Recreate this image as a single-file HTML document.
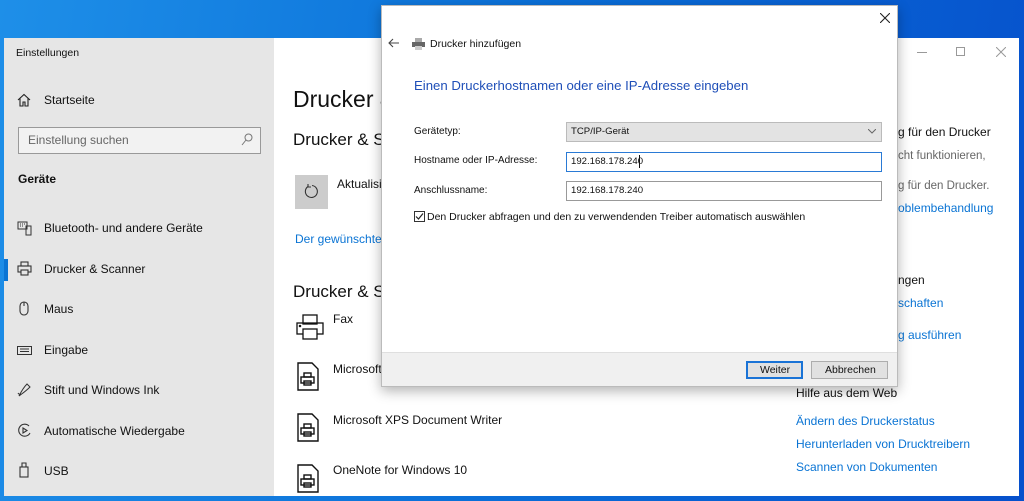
<!DOCTYPE html>
<html><head><meta charset="utf-8"><style>
*{margin:0;padding:0;box-sizing:border-box}
body{width:1024px;height:501px;overflow:hidden;position:relative;font-family:"Liberation Sans",sans-serif;background:linear-gradient(100deg,#1e8fe8 0%,#0a6fd8 50%,#0650cc 100%);}
.a{position:absolute;white-space:nowrap}
.s{font-size:12px;color:#111}
.bl{color:#0a74d4}
.d{font-size:10.5px;color:#111}
.f{font-size:9.6px;color:#111}
svg{position:absolute}
</style></head><body>
<div class="a" style="left:4px;top:38px;width:1015px;height:458px;background:#fff"></div>
<div class="a" style="left:4px;top:38px;width:270px;height:458px;background:#e6e6e6"></div>
<div class="a" style="left:16px;top:47px;font-size:10.5px;color:#111">Einstellungen</div>
<svg style="left:17px;top:93px" width="14" height="14" viewBox="0 0 14 14" fill="none" stroke="#222" stroke-width="1.1"><path d="M1 7L7 1.5 13 7M3 5.5V13H6V9H8V13H11V5.5"/></svg>
<div class="a s" style="left:44px;top:93px">Startseite</div>
<div class="a" style="left:18px;top:127px;width:243px;height:27px;border:1.5px solid #999;background:#f2f2f2"></div>
<div class="a" style="left:28px;top:133px;font-size:12px;color:#666">Einstellung suchen</div>
<svg style="left:241px;top:133px" width="12" height="13" viewBox="0 0 12 13" fill="none" stroke="#777" stroke-width="1"><circle cx="7.5" cy="4.5" r="3.5"/><path d="M5 7L1 12"/></svg>
<div class="a" style="left:18px;top:172px;font-size:12px;font-weight:bold;color:#111">Geräte</div>
<div class="a" style="left:4px;top:259px;width:4px;height:22px;background:#0a74d4"></div>
<svg style="left:17px;top:221px" width="16" height="15" viewBox="0 0 16 15" fill="none" stroke="#333" stroke-width="1"><rect x="1" y="1" width="9" height="7"/><rect x="9" y="5" width="5" height="9"/><path d="M3 3h1M5 3h1M7 3h1M3 5h1M5 5h1"/></svg>
<div class="a s" style="left:44px;top:221px">Bluetooth- und andere Geräte</div>
<svg style="left:17px;top:261px" width="16" height="15" viewBox="0 0 16 15" fill="none" stroke="#333" stroke-width="1.1"><rect x="4" y="1" width="7" height="4"/><rect x="1" y="5" width="13" height="6"/><rect x="4" y="9" width="7" height="5" fill="#e6e6e6"/></svg>
<div class="a s" style="left:44px;top:262px">Drucker &amp; Scanner</div>
<svg style="left:19px;top:301px" width="10" height="15" viewBox="0 0 10 15" fill="none" stroke="#333" stroke-width="1.1"><rect x="1" y="1" width="8" height="13" rx="4"/><path d="M5 1v4"/></svg>
<div class="a s" style="left:44px;top:302px">Maus</div>
<svg style="left:17px;top:346px" width="15" height="9" viewBox="0 0 15 9" fill="none" stroke="#333" stroke-width="1"><rect x="0.5" y="0.5" width="14" height="8"/><path d="M3 3h9M3 5.5h9"/></svg>
<div class="a s" style="left:44px;top:343px">Eingabe</div>
<svg style="left:17px;top:382px" width="15" height="15" viewBox="0 0 15 15" fill="none" stroke="#333" stroke-width="1"><path d="M2 14C4 10 6 6 10 2L13 5C9 9 6 11 2 14ZM1 11c1 2 3 1 3 1"/></svg>
<div class="a s" style="left:44px;top:383px">Stift und Windows Ink</div>
<svg style="left:17px;top:423px" width="15" height="15" viewBox="0 0 15 15" fill="none" stroke="#333" stroke-width="1.1"><path d="M12 3A6 6 0 1 0 13 10"/><path d="M6 5l4 2.5L6 10z"/></svg>
<div class="a s" style="left:44px;top:424px">Automatische Wiedergabe</div>
<svg style="left:19px;top:462px" width="10" height="16" viewBox="0 0 10 16" fill="none" stroke="#333" stroke-width="1.1"><rect x="1" y="5" width="8" height="10"/><path d="M3 5V1h4v4"/></svg>
<div class="a s" style="left:44px;top:464px">USB</div>
<div class="a" style="left:293px;top:86px;font-size:23px;color:#111">Drucker &amp;</div>
<div class="a" style="left:293px;top:130px;font-size:17px;color:#111">Drucker &amp; S</div>
<div class="a" style="left:295px;top:175px;width:33px;height:34px;background:#ccc"></div>
<svg style="left:303px;top:183px" width="17" height="17" viewBox="0 0 17 17" fill="none" stroke="#333" stroke-width="1.1"><path d="M5 3.5A6 6 0 1 0 9 2.5M5 1v3h3"/></svg>
<div class="a s" style="left:337px;top:177px">Aktualisi</div>
<div class="a s bl" style="left:295px;top:232px">Der gewünschte</div>
<div class="a" style="left:293px;top:282px;font-size:17px;color:#111">Drucker &amp; S</div>
<svg style="left:296px;top:314px" width="28" height="26" viewBox="0 0 28 26" fill="none" stroke="#111" stroke-width="1.3"><rect x="7" y="1" width="14" height="9"/><rect x="1" y="9" width="26" height="11"/><rect x="7" y="15" width="14" height="10" fill="#fff"/><circle cx="4" cy="12" r=".6" fill="#111"/></svg>
<div class="a s" style="left:333px;top:312px">Fax</div>
<svg style="left:297px;top:362px" width="22" height="29" viewBox="0 0 22 29" fill="none" stroke="#111" stroke-width="1.4"><path d="M1 1h14l6 6v21H1z"/><rect x="7" y="11" width="7" height="4"/><rect x="4" y="15" width="13" height="6"/><rect x="7" y="19" width="7" height="4"/></svg>
<div class="a s" style="left:333px;top:362px">Microsoft</div>
<svg style="left:297px;top:413px" width="22" height="29" viewBox="0 0 22 29" fill="none" stroke="#111" stroke-width="1.4"><path d="M1 1h14l6 6v21H1z"/><rect x="7" y="11" width="7" height="4"/><rect x="4" y="15" width="13" height="6"/><rect x="7" y="19" width="7" height="4"/></svg>
<div class="a s" style="left:333px;top:413px">Microsoft XPS Document Writer</div>
<svg style="left:297px;top:464px" width="22" height="29" viewBox="0 0 22 29" fill="none" stroke="#111" stroke-width="1.4"><path d="M1 1h14l6 6v21H1z"/><rect x="7" y="11" width="7" height="4"/><rect x="4" y="15" width="13" height="6"/><rect x="7" y="19" width="7" height="4"/></svg>
<div class="a s" style="left:333px;top:463px">OneNote for Windows 10</div>
<div class="a" style="left:917px;top:52px;width:10px;height:1px;background:#999"></div>
<div class="a" style="left:956px;top:47px;width:9px;height:9px;border:1px solid #999"></div>
<svg style="left:996px;top:47px" width="10" height="10" viewBox="0 0 10 10" stroke="#999" stroke-width="1"><path d="M0 0L10 10M10 0L0 10"/></svg>
<div class="a s" style="left:898px;top:125px">g für den Drucker</div>
<div class="a" style="left:898px;top:150px;font-size:11.5px;color:#666">cht funktionieren,</div>
<div class="a" style="left:898px;top:180px;font-size:11.5px;color:#666">g für den Drucker.</div>
<div class="a s bl" style="left:898px;top:201px">oblembehandlung</div>
<div class="a s" style="left:898px;top:273px">ngen</div>
<div class="a s bl" style="left:898px;top:296px">schaften</div>
<div class="a s bl" style="left:898px;top:328px">g ausführen</div>
<div class="a s" style="left:796px;top:386px">Hilfe aus dem Web</div>
<div class="a s bl" style="left:796px;top:414px">Ändern des Druckerstatus</div>
<div class="a s bl" style="left:796px;top:437px">Herunterladen von Drucktreibern</div>
<div class="a s bl" style="left:796px;top:460px">Scannen von Dokumenten</div>
<div class="a" style="left:381px;top:5px;width:517px;height:382px;background:#fff;border:1px solid #bbb;box-shadow:0 4px 12px rgba(0,0,0,.3)"></div>
<div class="a" style="left:382px;top:352px;width:515px;height:34px;background:#f0f0f0;border-top:1px solid #dfdfdf"></div>
<svg style="left:880px;top:13px" width="10" height="10" viewBox="0 0 10 10" stroke="#222" stroke-width="1.1"><path d="M0 0L10 10M10 0L0 10"/></svg>
<svg style="left:388px;top:38px" width="12" height="10" viewBox="0 0 12 10" fill="none" stroke="#444" stroke-width="1.1"><path d="M11 5H1M5 1L1 5l4 4"/></svg>
<svg style="left:412px;top:38px" width="13" height="12" viewBox="0 0 13 12"><rect x="3" y="0" width="7" height="4" fill="#aaa"/><rect x="0" y="4" width="13" height="5" fill="#666"/><rect x="3" y="8" width="7" height="4" fill="#ccc"/></svg>
<div class="a" style="left:430px;top:38px;font-size:10.5px;color:#111">Drucker hinzufügen</div>
<div class="a" style="left:414px;top:78px;font-size:13.2px;color:#1f4fb8">Einen Druckerhostnamen oder eine IP-Adresse eingeben</div>
<div class="a d" style="left:414px;top:126px;font-size:10px">Gerätetyp:</div>
<div class="a d" style="left:414px;top:155px;font-size:10px">Hostname oder IP-Adresse:</div>
<div class="a d" style="left:414px;top:185px;font-size:10px">Anschlussname:</div>
<div class="a" style="left:566px;top:122px;width:316px;height:20px;background:#e3e3e3;border:1px solid #bbb"></div>
<div class="a f" style="left:571px;top:126px">TCP/IP-Gerät</div>
<svg style="left:868px;top:129px" width="8" height="5" viewBox="0 0 8 5" fill="none" stroke="#666"><path d="M0 0l4 4 4-4"/></svg>
<div class="a" style="left:566px;top:152px;width:316px;height:20px;background:#fff;border:1px solid #2a7ad5"></div>
<div class="a f" style="left:571px;top:156px">192.168.178.240</div>
<div class="a" style="left:639px;top:155px;width:1px;height:13px;background:#111"></div>
<div class="a" style="left:566px;top:181px;width:316px;height:20px;background:#fff;border:1px solid #999"></div>
<div class="a f" style="left:571px;top:185px">192.168.178.240</div>
<div class="a" style="left:414px;top:211px;width:11px;height:11px;border:1px solid #333;background:#fff"></div>
<svg style="left:415px;top:212px" width="9" height="9" viewBox="0 0 9 9" fill="none" stroke="#222" stroke-width="1.2"><path d="M1 4.5l2.5 2.5L8 1.5"/></svg>
<div class="a d" style="left:427px;top:211px">Den Drucker abfragen und den zu verwendenden Treiber automatisch auswählen</div>
<div class="a" style="left:746px;top:361px;width:57px;height:18px;background:#e1e1e1;border:2px solid #1a73d6"></div>
<div class="a d" style="left:760px;top:364px">Weiter</div>
<div class="a" style="left:811px;top:361px;width:77px;height:18px;background:#e1e1e1;border:1px solid #adadad"></div>
<div class="a d" style="left:825px;top:364px">Abbrechen</div>
</body></html>
